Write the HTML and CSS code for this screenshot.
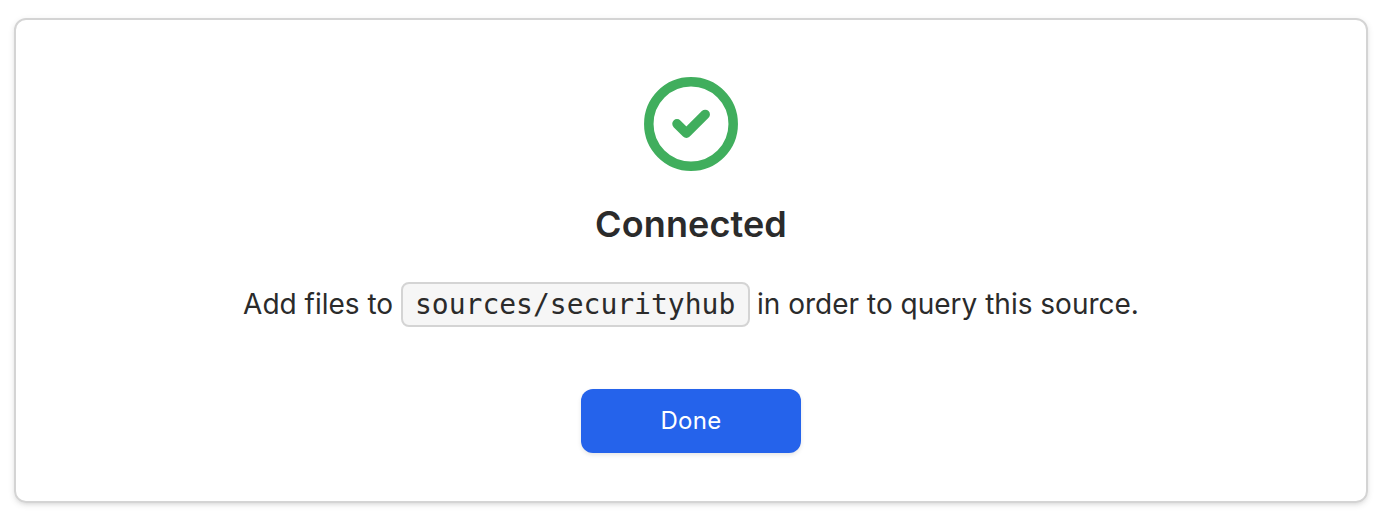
FILE: index.html
```html
<!DOCTYPE html>
<html lang="en">
<head>
<meta charset="utf-8">
<title>Connected</title>
<link rel="stylesheet" href="styles.css">
</head>
<body>
<main class="card">
<svg class="status-icon" viewBox="0 0 94 94" aria-hidden="true">
<circle cx="47" cy="47" r="42.2"/>
<path d="M33 46.800l9.400 9.400 18.800-18.800"/>
</svg>
<h1 class="title">Connected</h1>
<p class="message"><span>Add files to</span><code class="path">sources/securityhub</code><span>in order to query this source.</span></p>
<button class="done" type="button">Done</button>
</main>
</body>
</html>
```

FILE: styles.css
```css
* { box-sizing: border-box; }
body {
  min-height: 522px;
  margin: 0;
  padding: 18px 26px 0 14px;
  background: #fff;
  color: #2b2b2b;
  font-family: Inter, sans-serif;
}
.card {
  height: 485px;
  padding-top: 57px;
  display: flex;
  flex-direction: column;
  align-items: center;
  border: 2px solid #d4d4d4;
  border-radius: 12px;
  box-shadow: 0 2px 6px rgba(0, 0, 0, .1), 0 2px 4px -2px rgba(0, 0, 0, .1);
}
.status-icon {
  width: 94px;
  height: 94px;
  fill: none;
  stroke: #40ae5d;
  stroke-width: 9.500;
  stroke-linecap: round;
  stroke-linejoin: round;
}
.title {
  margin: 25px 0 0;
  font-size: 36px;
  line-height: 56px;
  font-weight: 600;
  letter-spacing: .1px;
}
.message {
  margin: 30px 0 0;
  display: flex;
  align-items: center;
  gap: 7.500px;
  white-space: nowrap;
  font-size: 28px;
  line-height: 45px;
}
.path {
  height: 45px;
  padding: 0 12.300px;
  border: 2px solid #d4d4d4;
  border-radius: 8px;
  background: #f6f6f6;
  font: 28px/41px "DejaVu Sans Mono", monospace;
}
.done {
  width: 220px;
  height: 64px;
  margin-top: 62px;
  padding: 0;
  border: 0;
  border-radius: 12px;
  background: #2563eb;
  color: #fff;
  font: 400 24px/64px Inter, sans-serif;
  letter-spacing: .3px;
  box-shadow: 0 2px 4px rgba(0, 0, 0, .1);
}
```
